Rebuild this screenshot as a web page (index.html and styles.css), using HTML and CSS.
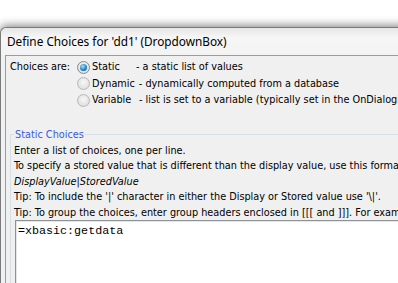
FILE: index.html
```html
<!DOCTYPE html>
<html lang="en">
<head>
  <meta charset="UTF-8" />
  <meta name="viewport" content="width=device-width, initial-scale=1" />
  <title>Define Choices</title>
  <link rel="stylesheet" href="styles.css">
</head>
<body>

  <div class="window">
    <div class="titlebar">Define Choices for 'dd1' (DropdownBox)</div>

    <div class="client">
      <div class="choices">
        <span class="choices-label">Choices are:</span>
        <div class="options">
          <div class="option">
            <span class="radio checked"></span>
            <span class="opt-name">Static</span>
            <span class="opt-desc">- a static list of values</span>
          </div>
          <div class="option">
            <span class="radio"></span>
            <span class="opt-name">Dynamic</span>
            <span class="opt-desc">- dynamically computed from a database</span>
          </div>
          <div class="option">
            <span class="radio"></span>
            <span class="opt-name wide">Variable</span>
            <span class="opt-desc">- list is set to a variable (typically set in the OnDialogInitialize event)</span>
          </div>
        </div>
      </div>

      <fieldset class="group">
        <legend>Static Choices</legend>
        <p>Enter a list of choices, one per line.</p>
        <p>To specify a stored value that is different than the display value, use this format:</p>
        <p><i>DisplayValue</i>|<i>StoredValue</i></p>
        <p>Tip: To include the '|' character in either the Display or Stored value use '\|'.</p>
        <p>Tip: To group the choices, enter group headers enclosed in [[[ and ]]]. For example: [[[Group 1]]]</p>
        <div class="textbox">=xbasic:getdata</div>
      </fieldset>
    </div>
  </div>

</body>
</html>
```

FILE: styles.css
```css
* {
  box-sizing: border-box;
}
body {
  margin: 0;
  background-color: #ffffff;
  overflow: hidden;
  height: 283px;
}

.window {
  margin-top: 27px;
  width: 560px;
  height: 320px;
  border-top: 1px solid #7a7a7a;
  border-left: 1px solid #7a7a7a;
  border-radius: 6px 0 0 0;
  background-color: #eef0f2;
  box-shadow: 0 -2px 9px rgba(0,0,0,0.45);
  padding-left: 4px;
}
.titlebar {
  height: 27px;
  line-height: 27px;
  margin-left: -4px;
  padding-left: 6px;
  font-family: 'Noto Sans', sans-serif;
  font-size: 11.8px;
  color: #000;
  white-space: nowrap;
  background: linear-gradient(to bottom, #e6e6e6, #f6f6f6 35%, #f3f3f3);
  border-radius: 6px 0 0 0;
}

.client {
  border-top: 1px solid #9c9c9c;
  border-left: 1px solid #9c9c9c;
  background-color: #f0f0f0;
  height: 300px;
  padding: 3px 0 0 4px;
  font-family: 'DejaVu Sans Condensed', sans-serif;
  font-size: 10.8px;
  color: #000;
  white-space: nowrap;
}

.choices {
  display: flex;
  align-items: flex-start;
  line-height: 16.5px;
}
.choices-label {
  margin-right: 7px;
}
.option {
  display: flex;
  align-items: center;
  height: 16.5px;
}
.radio {
  flex: none;
  width: 13px;
  height: 13px;
  border-radius: 50%;
  border: 1px solid #b8b8b8;
  background: radial-gradient(circle at 50% 40%, #f8f8f8, #d6d6d6);
  margin-right: 2px;
  position: relative;
}
.radio.checked {
  border-color: #8a8a8a;
}
.radio.checked::after {
  content: "";
  position: absolute;
  left: 2px;
  top: 2px;
  width: 7px;
  height: 7px;
  border-radius: 50%;
  background: radial-gradient(circle at 40% 35%, #9fe2ff, #1a7fc4 60%, #0d4f8c);
}
.opt-name {
  flex: none;
  min-width: 40px;
}
.opt-name.wide {
  min-width: 43px;
}
.opt-desc {
  margin-left: 4px;
}

.group {
  margin: 18px 0 0 0;
  padding: 0 0 0 3px;
  border: 1px solid #d5dfe5;
  border-right: none;
  border-bottom: none;
  line-height: 15.5px;
}
.group legend {
  padding: 0 1px;
  margin-left: 0;
  line-height: 16px;
  color: #3a5ae0;
}
.group p {
  margin: 0;
}
.textbox {
  margin-left: 1px;
  height: 90px;
  border: 1px solid #8e9198;
  background-color: #ffffff;
  box-shadow: inset 1px 1px 0 #e3e6ea;
  padding: 3px 0 0 2px;
  font-family: 'Liberation Mono', monospace;
  font-size: 11.7px;
  line-height: 14px;
}
```
